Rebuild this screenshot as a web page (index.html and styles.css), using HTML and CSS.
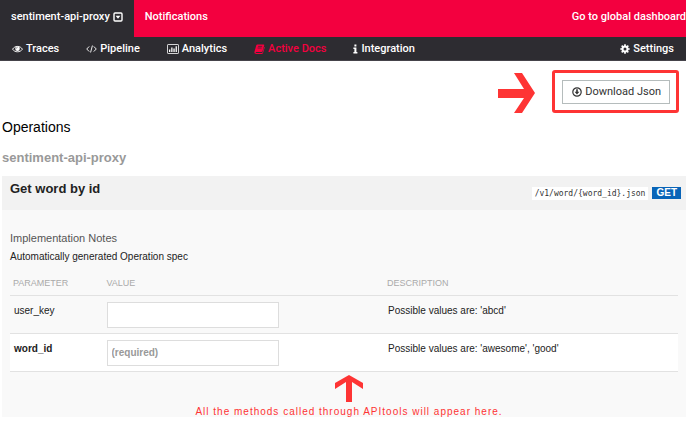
FILE: index.html
```html
<!DOCTYPE html>
<html lang="en">
<head>
<meta charset="utf-8">
<title>Active Docs</title>
<link rel="stylesheet" href="styles.css">
</head>
<body>
<header class="topbar">
  <button class="service" type="button">sentiment-api-proxy
    <svg class="icon" width="10" height="10" viewBox="0 0 10 10"><rect x="1" y="1" width="8" height="8" rx="1" fill="none" stroke="currentColor" stroke-width="1.4"/><path d="M2.6 3.8h4.8L5 6.7z" fill="currentColor"/></svg>
  </button>
  <a class="toplink" href="#notifications">Notifications</a>
  <a class="toplink toplink-end" href="#dashboard">Go to global dashboard</a>
</header>
<nav class="subnav">
  <a class="tab" href="#traces"><svg class="icon" width="11" height="10" viewBox="0 0 12 10"><path d="M.6 5.2C3 1.2 9 1.2 11.4 5.2 9 9 3 9 .6 5.2z" fill="none" stroke="currentColor"/><circle cx="6" cy="4.6" r="2.5" fill="currentColor"/><path d="M4.7 4.5Q4.8 3.3 6 3.2" fill="none" stroke="#2d2c31" stroke-width=".6"/></svg>Traces</a>
  <a class="tab" href="#pipeline"><svg class="icon" width="11" height="10" viewBox="0 0 12 10"><path d="M3.5 2.2.8 5l2.7 2.8M8.5 2.2 11.2 5 8.5 7.8M7 1.2 5 8.8" fill="none" stroke="currentColor"/></svg>Pipeline</a>
  <a class="tab" href="#analytics"><svg class="icon" width="12" height="10" viewBox="0 0 12 10"><rect x=".5" y=".5" width="11" height="9" rx=".6" fill="none" stroke="currentColor" stroke-width=".8"/><path d="M2 5.5h1.3V8H2zM4.2 3.5h1.3V8H4.2zM6.4 4.5h1.3V8H6.4zM8.6 2.2h1.3V8H8.6z" fill="currentColor"/></svg>Analytics</a>
  <a class="tab active" href="#docs"><svg class="icon" width="11" height="10" viewBox="0 0 11 10"><path d="M3.3.4h6.2q1 0 .7 1L8.5 7.2q-.3.8-1.1.8H2.2q-.8 0-.6.5.1.4.8.4h5.5q.5 0 .7-.6l1.7-5.5q.6.3.4.9L9 9.1q-.2.8-1 .8H2Q.2 9.8.4 8.1L2.3 1.2Q2.6.4 3.3.4z" fill="currentColor"/><path d="M4.1 2.4h4M3.6 4h4" stroke="#2d2c31" stroke-width=".7"/></svg>Active Docs</a>
  <a class="tab" href="#integration"><svg class="icon" width="5" height="10" viewBox="0 0 5 10"><path d="M1.4.4h2v2h-2zM.4 3.6h3v4.5h1v1.5H.4V8.1h1v-3h-1z" fill="currentColor"/></svg>Integration</a>
  <a class="tab tab-end" href="#settings"><svg class="icon" width="10" height="10" viewBox="0 0 10 10"><circle cx="5" cy="5" r="2.5" fill="none" stroke="currentColor" stroke-width="2"/><path d="M5 .3v2M5 7.7v2M.3 5h2M7.7 5h2M1.7 1.7l1.3 1.3M7 7l1.3 1.3M1.7 8.3 3 7M7 3l1.3-1.3" stroke="currentColor" stroke-width="1.7"/></svg>Settings</a>
</nav>
<main class="page">
  <div class="actions">
    <svg class="icon" width="37" height="40" viewBox="0 0 37 40"><path d="M0 16h26L16 0h8l13 20-13 20h-8l10-15H0z" fill="#fe3434"/></svg>
    <div class="highlight">
      <button class="download" type="button"><svg class="icon" width="10" height="10" viewBox="0 0 10 10"><circle cx="5" cy="5" r="4.2" fill="none" stroke="currentColor" stroke-width="1.2"/><path d="M4.2 2.2h1.6v2.5h1.6L5 7.5 2.6 4.7h1.6z" fill="currentColor"/></svg>Download Json</button>
    </div>
  </div>
  <h1 class="title">Operations</h1>
  <h2 class="api">sentiment-api-proxy</h2>
  <section class="operation">
    <div class="operation-head">
      <h3 class="operation-name">Get word by id</h3>
      <code class="path">/v1/word/{word_id}.json</code>
      <span class="method">GET</span>
    </div>
    <div class="operation-body">
      <h4 class="notes-title">Implementation Notes</h4>
      <p class="notes">Automatically generated Operation spec</p>
      <table class="params">
        <thead>
          <tr><th class="col-name">PARAMETER</th><th class="col-value">VALUE</th><th>DESCRIPTION</th></tr>
        </thead>
        <tbody>
          <tr><td><label for="user_key">user_key</label></td><td class="cell-value"><input class="field" id="user_key" type="text"></td><td>Possible values are: 'abcd'</td></tr>
          <tr class="required"><td><label for="word_id">word_id</label></td><td class="cell-value"><input class="field" id="word_id" type="text" placeholder="(required)"></td><td>Possible values are: 'awesome', 'good'</td></tr>
        </tbody>
      </table>
      <div class="callout">
        <svg class="icon" width="28" height="27" viewBox="0 0 28 27"><path d="M11 27V7L0 14V8L14 0l14 8v6L17 7v20z" fill="#fe3434"/></svg>
        <p class="callout-text">All the methods called through APItools will appear here.</p>
      </div>
    </div>
  </section>
</main>
</body>
</html>
```
FILE: styles.css
```css
* { box-sizing: border-box; }
body { margin: 0; background: #fff; color: #222; font: 10px/16px "Liberation Sans", Arial, sans-serif; }
h1, h2, h3, h4, p { margin: 0; }
a { color: inherit; text-decoration: none; }
button { font: inherit; cursor: pointer; }
.icon { flex: none; }

.topbar { display: flex; align-items: stretch; height: 37px; background: #f3003f; color: #fff; font: 500 11px/16px Roboto, sans-serif; }
.service { display: flex; align-items: center; gap: 3px; padding: 0 11px 4px; border: 0; background: #2d2c31; color: #fff; }
.toplink { padding: 9px 0 0 11px; }
.toplink-end { margin-left: auto; }

.subnav { display: flex; align-items: center; gap: 27px; height: 24px; padding: 0 12px; border-bottom: 1px solid #45434a; background: #2d2c31; color: #fff; font: 500 11px/16px Roboto, sans-serif; }
.tab { display: flex; align-items: center; gap: 3px; }
.active { color: #f3003f; }
.tab-end { margin-left: auto; }

.page { padding-left: 2px; }
.actions { display: flex; justify-content: flex-end; align-items: flex-end; gap: 17px; padding: 9px 7px 0 0; }
.highlight { padding: 7px 6px 6px 7px; border: 3px solid #fe3434; border-radius: 3px; }
.download { display: flex; align-items: center; gap: 3px; height: 24px; padding: 0 8px 0 9px; border: 1px solid #b5bcbc; background: #fff; color: #333; font: 11px/16px Roboto, sans-serif; }
.title { margin-top: 4px; color: #000; font-size: 14px; line-height: 20px; font-weight: 400; }
.api { margin-top: 12px; color: #999; font-size: 13px; line-height: 18px; }

.operation { margin-top: 9px; background: #f9f9f9; }
.operation-head { display: flex; align-items: center; gap: 4px; height: 34px; padding: 0 5px 0 8px; background: #f2f2f2; }
.operation-name { flex: 1; padding-bottom: 8px; font-size: 13px; line-height: 16px; }
.path { padding: 0 3px; background: #fff; color: #333; font: 8px/13px "DejaVu Sans Mono", monospace; }
.method { padding: 0 4px; background: #0864b8; color: #fff; font-weight: 700; line-height: 12px; }
.operation-body { padding: 20px 8px 0; }
.notes-title { color: #555; font-size: 11px; font-weight: 400; }
.notes { margin-top: 3px; }

.params { width: 100%; margin-top: 6px; border-collapse: collapse; table-layout: fixed; }
.params th { height: 24px; padding: 0 3px; color: #aaa; font-size: 9px; font-weight: 400; text-align: left; }
.params td { height: 38px; padding: 7px 4px; vertical-align: top; }
.params tr { border-bottom: 1px solid #e2e2e2; }
.col-name { width: 14%; }
.col-value { width: 42%; }
.params .cell-value { padding: 6px 3px 5px; }
.required { background: #fff; }
.required label { font-weight: 700; }
.field { display: block; width: 172px; height: 26px; padding: 0 4px; border: 1px solid #ddd; background: #fff; font: 10px/16px "Liberation Sans", Arial, sans-serif; }
.field::placeholder { color: #999; font-weight: 700; opacity: 1; }

.callout { display: flex; flex-direction: column; align-items: center; gap: 4px; padding: 3px 0 0 10px; }
.callout-text { color: #fe3434; letter-spacing: 1px; line-height: 11px; }
```
